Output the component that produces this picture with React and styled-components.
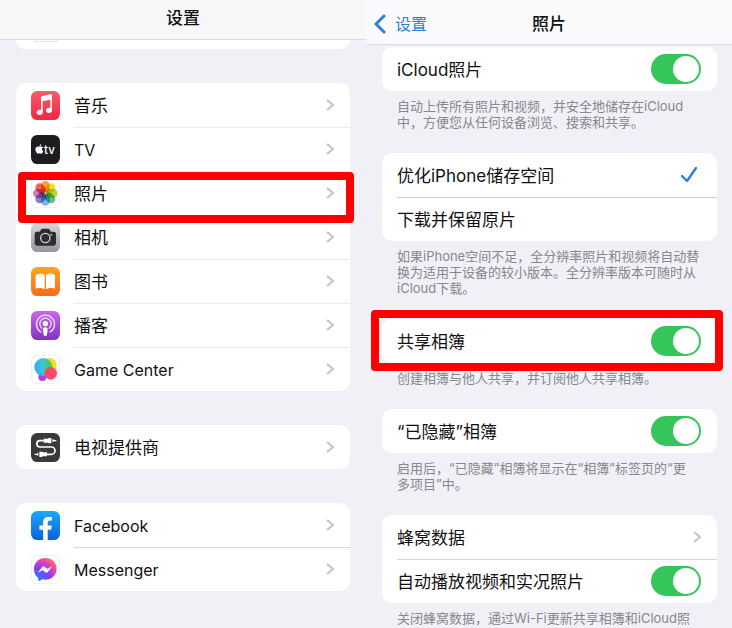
import React, { useState } from 'react';
import styled, { createGlobalStyle, css } from 'styled-components';
import { FaApple, FaFacebookF } from 'react-icons/fa';

const GlobalStyle = createGlobalStyle`
  * {
    box-sizing: border-box;
  }

  body {
    margin: 0;
    background: #f1f0f6;
    color: #111;
    font-family: Inter, 'Noto Sans CJK SC', sans-serif;
    font-size: 17px;
  }
`;

/* ---------- app icons ---------- */

function MusicIcon() {
  return (
    <AppIcon viewBox="0 0 87 87">
      <defs>
        <linearGradient id="music" x1="0" y1="0" x2="0" y2="1">
          <stop offset="0" stopColor="#fb5b70" />
          <stop offset="1" stopColor="#f6243f" />
        </linearGradient>
      </defs>
      <rect width="87" height="87" rx="19" fill="url(#music)" />
      <path d="M30 20q0-4 4-5l25-5q4-1 4 3v44h-5V26l-23 5v33h-5z" fill="#fff" />
      <ellipse cx="26" cy="64" rx="9" ry="8" fill="#fff" />
      <ellipse cx="54" cy="58" rx="9" ry="8" fill="#fff" />
    </AppIcon>
  );
}

function TvIcon() {
  return (
    <AppIcon viewBox="0 0 87 87">
      <rect width="87" height="87" rx="19" fill="#1d1d1f" />
      <FaApple x="9" y="26" size="32" color="#fff" />
      <text x="39" y="56" fontSize="35" fontWeight="500" fill="#fff">tv</text>
    </AppIcon>
  );
}

const petals = ['#f8a02c', '#f2df1c', '#b2d536', '#55bd8b', '#6fb2e8', '#8478c4', '#c77bb4', '#ee5c50'];

function PhotosIcon() {
  return (
    <AppIcon viewBox="0 0 87 87">
      <rect x="1" y="1" width="85" height="85" rx="18" fill="#fff" stroke="#e4e4e6" strokeWidth="2" />
      {petals.map((color, i) => (
        <rect
          key={color}
          x="30"
          y="6"
          width="26"
          height="35"
          rx="13"
          fill={color}
          opacity="0.95"
          transform={`rotate(${i * 45} 43 43)`}
          style={{ mixBlendMode: 'multiply' }}
        />
      ))}
    </AppIcon>
  );
}

function CameraIcon() {
  return (
    <AppIcon viewBox="0 0 87 87">
      <defs>
        <linearGradient id="camera" x1="0" y1="0" x2="0" y2="1">
          <stop offset="0" stopColor="#d9d9dc" />
          <stop offset="1" stopColor="#949499" />
        </linearGradient>
      </defs>
      <rect width="87" height="87" rx="19" fill="url(#camera)" />
      <path d="M18 26h8l5-7q1-2 4-2h16q3 0 4 2l5 7h8q7 0 7 7v28q0 7-7 7H18q-7 0-7-7V33q0-7 7-7z" fill="#2c2d30" />
      <circle cx="43" cy="45" r="14" fill="none" stroke="#d3d3d6" strokeWidth="4" />
      <circle cx="61" cy="35" r="3" fill="#f2b62b" />
    </AppIcon>
  );
}

function BooksIcon() {
  return (
    <AppIcon viewBox="0 0 87 87">
      <defs>
        <linearGradient id="books" x1="0" y1="0" x2="0" y2="1">
          <stop offset="0" stopColor="#ffa51c" />
          <stop offset="1" stopColor="#fb6a1c" />
        </linearGradient>
      </defs>
      <rect width="87" height="87" rx="19" fill="url(#books)" />
      <path d="M14 25q13-10 27-1v43q-13-9-27-2z" fill="#fff" />
      <path d="M72 25q-13-10-27-1v43q13-9 27-2z" fill="#fff" />
    </AppIcon>
  );
}

function PodcastsIcon() {
  return (
    <AppIcon viewBox="0 0 87 87">
      <defs>
        <linearGradient id="podcasts" x1="0" y1="0" x2="0" y2="1">
          <stop offset="0" stopColor="#c869ee" />
          <stop offset="1" stopColor="#8232bf" />
        </linearGradient>
      </defs>
      <rect width="87" height="87" rx="19" fill="url(#podcasts)" />
      <g fill="none" stroke="#f3dcfb" strokeWidth="4" strokeLinecap="round">
        <path d="M30 63a27 27 0 1 1 27 0" />
        <path d="M32 51a17 17 0 1 1 23 0" />
      </g>
      <circle cx="43" cy="38" r="8" fill="#fff" />
      <path d="M36 54q0-5 7-5t7 5l-2 17q-1 4-5 4t-5-4z" fill="#fff" />
    </AppIcon>
  );
}

function GameCenterIcon() {
  return (
    <AppIcon viewBox="0 0 87 87">
      <defs>
        <linearGradient id="gcBlue" x1="0" y1="0" x2="1" y2="0">
          <stop offset="0" stopColor="#25a3f4" />
          <stop offset="0.5" stopColor="#2fc5cf" />
          <stop offset="1" stopColor="#42c43f" />
        </linearGradient>
        <linearGradient id="gcPink" x1="0" y1="0" x2="1" y2="1">
          <stop offset="0" stopColor="#f8504c" />
          <stop offset="1" stopColor="#fb2d83" />
        </linearGradient>
      </defs>
      <rect x="1" y="1" width="85" height="85" rx="18" fill="#fff" stroke="#e4e4e6" strokeWidth="2" />
      <circle cx="34" cy="66" r="12" fill="#a142f2" />
      <circle cx="56" cy="30" r="21" fill="#f3dd22" />
      <circle cx="37" cy="36" r="27" fill="url(#gcBlue)" opacity="0.93" />
      <circle cx="59" cy="55" r="19" fill="url(#gcPink)" opacity="0.93" />
    </AppIcon>
  );
}

function ProviderIcon() {
  return (
    <AppIcon viewBox="0 0 87 87">
      <rect width="87" height="87" rx="19" fill="#3a3a3c" />
      <path d="M38 23H27a9 9 0 0 0 0 19h34a11 11 0 0 1 0 22H48" fill="none" stroke="#fff" strokeWidth="5" />
      <path d="M38 17h14v-2h9v16h-9v-2H38zM64 19h4v8h-4zM68 21h8v4h-8z" fill="#fff" />
      <path d="M48 58H34v-2h-9v16h9v-2h14zM18 60h4v8h-4zM11 62h7v4h-7z" fill="#fff" />
    </AppIcon>
  );
}

function FacebookIcon() {
  return (
    <AppIcon viewBox="0 0 87 87">
      <defs>
        <linearGradient id="facebook" x1="0" y1="0" x2="0" y2="1">
          <stop offset="0" stopColor="#19a9fb" />
          <stop offset="1" stopColor="#0b62dd" />
        </linearGradient>
      </defs>
      <rect width="87" height="87" rx="19" fill="url(#facebook)" />
      <FaFacebookF x="9" y="17" size="70" color="#fff" />
    </AppIcon>
  );
}

function MessengerIcon() {
  return (
    <AppIcon viewBox="0 0 87 87">
      <defs>
        <radialGradient id="messenger" cx="0.15" cy="1" r="1.1">
          <stop offset="0" stopColor="#1683fb" />
          <stop offset="0.55" stopColor="#8a3cf6" />
          <stop offset="0.85" stopColor="#ef4aa0" />
          <stop offset="1" stopColor="#fb6a70" />
        </radialGradient>
      </defs>
      <rect x="1" y="1" width="85" height="85" rx="18" fill="#fff" stroke="#e4e4e6" strokeWidth="2" />
      <path d="M43 9c20 0 34 14 34 32S63 74 43 74q-5 0-9-1l-9 5q-3 1-3-3v-6C13 63 9 53 9 41 9 23 23 9 43 9z" fill="url(#messenger)" />
      <path d="M22 52l12-16q3-3 6-1l9 7 13-7-12 16q-3 3-6 1l-9-7z" fill="#fff" stroke="#fff" strokeWidth="1" />
    </AppIcon>
  );
}

function BlankIcon() {
  return (
    <AppIcon viewBox="0 0 87 87">
      <rect x="1" y="1" width="85" height="85" rx="18" fill="#fff" stroke="#d0d0d3" strokeWidth="2" />
    </AppIcon>
  );
}

function Chevron() {
  return (
    <ChevronSvg viewBox="0 0 8 12">
      <path d="M1 1l6 5-6 5" />
    </ChevronSvg>
  );
}

/* ---------- rows ---------- */

const appGroups = [
  [
    { id: 'music', label: '音乐', Icon: MusicIcon },
    { id: 'tv', label: 'TV', Icon: TvIcon, latin: true },
    { id: 'photos', label: '照片', Icon: PhotosIcon, marked: true },
    { id: 'camera', label: '相机', Icon: CameraIcon },
    { id: 'books', label: '图书', Icon: BooksIcon },
    { id: 'podcasts', label: '播客', Icon: PodcastsIcon },
    { id: 'game-center', label: 'Game Center', Icon: GameCenterIcon, latin: true },
  ],
  [{ id: 'tv-provider', label: '电视提供商', Icon: ProviderIcon }],
  [
    { id: 'facebook', label: 'Facebook', Icon: FacebookIcon, latin: true },
    { id: 'messenger', label: 'Messenger', Icon: MessengerIcon, latin: true },
  ],
];

function AppRow({ id, label, Icon, latin, marked }) {
  return (
    <LinkRow href={`#${id}`}>
      <Icon />
      <RowBody>
        <RowText $latin={latin}>{label}</RowText>
        <Chevron />
      </RowBody>
      {marked && <RowMark />}
    </LinkRow>
  );
}

function SwitchRow({ label }) {
  return (
    <LabelRow>
      <RowBody>
        <RowText>{label}</RowText>
        <Switch type="checkbox" role="switch" defaultChecked />
      </RowBody>
    </LabelRow>
  );
}

function ChoiceRow({ label, checked, onChange }) {
  return (
    <LabelRow>
      <RowBody>
        <RowText>{label}</RowText>
        <Radio type="radio" name="storage" checked={checked} onChange={onChange} />
        {checked && (
          <CheckSvg viewBox="0 0 16 16">
            <path d="M1 9l5 5L15 1" />
          </CheckSvg>
        )}
      </RowBody>
    </LabelRow>
  );
}

function Note({ lines }) {
  return (
    <NoteText>
      {lines.map((line) => (
        <span key={line}>{line}</span>
      ))}
    </NoteText>
  );
}

function SettingsPane() {
  return (
    <Pane>
      <Header $height={40} $padding="0 8px 4px" $tone="#f7f7f8">
        <Title>设置</Title>
      </Header>
      <PeekCard>
        <BlankIcon />
      </PeekCard>
      <Groups>
        {appGroups.map((group, i) => (
          <Card key={group[0].id} $line={i === 0 ? '#ebebed' : '#d6d6d9'}>
            {group.map((app) => (
              <AppRow key={app.id} {...app} />
            ))}
          </Card>
        ))}
      </Groups>
    </Pane>
  );
}

function PhotosPane() {
  const [storage, setStorage] = useState('optimize');

  return (
    <Pane>
      <Header $height={45} $padding="3px 8px 0" $tone="#fafafc">
        <Back href="#settings">
          <BackSvg viewBox="0 0 12 20">
            <path d="M10 2L2 10l8 8" />
          </BackSvg>
          设置
        </Back>
        <Title>照片</Title>
      </Header>
      <Sections>
        <section>
          <Card>
            <SwitchRow label="iCloud照片" />
          </Card>
          <Note lines={['自动上传所有照片和视频，并安全地储存在iCloud', '中，方便您从任何设备浏览、搜索和共享。']} />
        </section>
        <section>
          <Card $line="#cbcbce">
            <ChoiceRow
              label="优化iPhone储存空间"
              checked={storage === 'optimize'}
              onChange={() => setStorage('optimize')}
            />
            <ChoiceRow
              label="下载并保留原片"
              checked={storage === 'download'}
              onChange={() => setStorage('download')}
            />
          </Card>
          <Note
            lines={[
              '如果iPhone空间不足，全分辨率照片和视频将自动替',
              '换为适用于设备的较小版本。全分辨率版本可随时从',
              'iCloud下载。',
            ]}
          />
        </section>
        <section>
          <Card>
            <SwitchRow label="共享相簿" />
            <CardMark />
          </Card>
          <Note lines={['创建相簿与他人共享，并订阅他人共享相簿。']} />
        </section>
        <section>
          <Card>
            <SwitchRow label="“已隐藏”相簿" />
          </Card>
          <Note lines={['启用后，“已隐藏”相簿将显示在“相簿”标签页的“更', '多项目”中。']} />
        </section>
        <section>
          <Card $line="#d6d6d9">
            <LinkRow href="#cellular">
              <RowBody>
                <RowText>蜂窝数据</RowText>
                <Chevron />
              </RowBody>
            </LinkRow>
            <SwitchRow label="自动播放视频和实况照片" />
          </Card>
          <Note lines={['关闭蜂窝数据，通过Wi-Fi更新共享相簿和iCloud照']} />
        </section>
      </Sections>
    </Pane>
  );
}

function App() {
  return (
    <>
      <GlobalStyle />
      <Screens>
        <SettingsPane />
        <PhotosPane />
      </Screens>
    </>
  );
}

const Screens = styled.main`
  display: grid;
  grid-template-columns: 1fr 1fr;
`;

const Pane = styled.div`
  display: flex;
  flex-direction: column;
  min-width: 0;
`;

const Header = styled.header`
  display: grid;
  grid-template-columns: 1fr auto 1fr;
  align-items: center;
  flex: none;
  height: ${({ $height }) => $height}px;
  padding: ${({ $padding }) => $padding};
  background: ${({ $tone }) => $tone};
  border-bottom: 1px solid #dcdce0;
`;

const Title = styled.h1`
  grid-column: 2;
  margin: 0;
  font-size: 17px;
  font-weight: 500;
  line-height: 24px;
`;

const Back = styled.a`
  display: flex;
  align-items: center;
  gap: 9px;
  color: #2b7fd6;
  font-size: 16px;
  line-height: 24px;
  text-decoration: none;
`;

const BackSvg = styled.svg`
  width: 12px;
  height: 20px;
  fill: none;
  stroke: currentColor;
  stroke-width: 3;
  stroke-linecap: round;
  stroke-linejoin: round;
`;

const Groups = styled.div`
  display: flex;
  flex-direction: column;
  gap: 34px;
  padding: 34px 16px 0;
`;

const Sections = styled.div`
  display: flex;
  flex-direction: column;
  gap: 23px;
  padding: 2px 15px 0 16px;
`;

const Card = styled.div`
  --line: ${({ $line }) => $line || 'transparent'};
  position: relative;
  border-radius: 10px;
  background: #fff;
`;

/* last card of the list scrolled under the header */
const PeekCard = styled.div`
  display: flex;
  align-items: flex-end;
  flex: none;
  height: 9px;
  margin: 0 16px;
  padding: 0 15px 7px;
  overflow: hidden;
  border-radius: 0 0 10px 10px;
  background: #fff;
`;

const RowBody = styled.div`
  display: flex;
  flex: 1;
  align-items: center;
  justify-content: space-between;
  height: 44px;
  padding: 0 16px 1px 0;
  border-top: 1px solid transparent;
`;

const RowText = styled.span`
  padding-top: 2px;
  font-size: ${({ $latin }) => ($latin ? 16 : 17)}px;
  line-height: 24px;
`;

const row = css`
  position: relative;
  display: flex;
  align-items: center;
  gap: 14px;
  padding-left: 15px;
  color: inherit;
  text-decoration: none;

  &:not(:first-child) > ${RowBody} {
    border-top-color: var(--line);
  }
`;

const LinkRow = styled.a`
  ${row}
`;

const LabelRow = styled.label`
  ${row}
`;

const AppIcon = styled.svg`
  flex: none;
  width: 29px;
  height: 29px;
  isolation: isolate;
`;

const ChevronSvg = styled.svg`
  width: 8px;
  height: 12px;
  fill: none;
  stroke: #c3c3c6;
  stroke-width: 2;
`;

const CheckSvg = styled.svg`
  width: 16px;
  height: 16px;
  margin-right: 4px;
  fill: none;
  stroke: #2b7fd6;
  stroke-width: 2.4;
  stroke-linecap: round;
  stroke-linejoin: round;
`;

const Switch = styled.input`
  display: flex;
  justify-content: flex-start;
  appearance: none;
  width: 50px;
  height: 30px;
  margin: 0;
  padding: 2px;
  border-radius: 15px;
  background: #e4e4e8;

  &::before {
    content: '';
    width: 26px;
    height: 26px;
    border-radius: 50%;
    background: #fff;
  }

  &:checked {
    justify-content: flex-end;
    background: #35c55b;
  }
`;

const Radio = styled.input`
  position: absolute;
  opacity: 0;
  pointer-events: none;
`;

const NoteText = styled.p`
  display: flex;
  flex-direction: column;
  margin: 0;
  padding: 7px 0 0 15px;
  color: #87878c;
  font-size: 13px;
  line-height: 16px;
  white-space: nowrap;
`;

const mark = css`
  position: absolute;
  z-index: 1;
  border: 8px solid #fe0000;
  border-radius: 4px;
  pointer-events: none;
`;

const RowMark = styled.span`
  ${mark}
  inset: 1px -4px -8px 2px;
`;

const CardMark = styled.span`
  ${mark}
  inset: -9px -6px -8px -11px;
`;

export default App;
